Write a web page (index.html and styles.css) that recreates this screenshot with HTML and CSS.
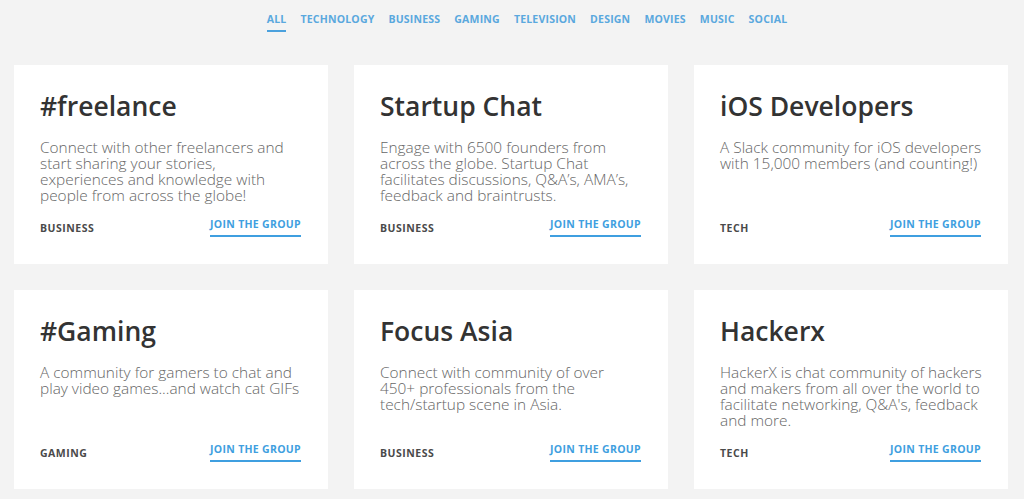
FILE: index.html
```html
<!DOCTYPE html>
<html lang="en">
<head>
<meta charset="utf-8">
<title>Communities</title>
<link rel="stylesheet" href="styles.css">
</head>
<body>
<nav class="filters">
  <a class="filter active">ALL</a>
  <a class="filter">TECHNOLOGY</a>
  <a class="filter">BUSINESS</a>
  <a class="filter">GAMING</a>
  <a class="filter">TELEVISION</a>
  <a class="filter">DESIGN</a>
  <a class="filter">MOVIES</a>
  <a class="filter">MUSIC</a>
  <a class="filter">SOCIAL</a>
</nav>
<main class="grid">
  <article class="card">
    <h2 class="title">#freelance</h2>
    <p class="desc desc-narrow">Connect with other freelancers and start sharing your stories, experiences and knowledge with people from across the globe!</p>
    <div class="footer"><span class="tag">BUSINESS</span><a class="join">JOIN THE GROUP</a></div>
  </article>
  <article class="card">
    <h2 class="title">Startup Chat</h2>
    <p class="desc">Engage with 6500 founders from across the globe. Startup Chat facilitates discussions, Q&amp;A’s, AMA’s, feedback and braintrusts.</p>
    <div class="footer"><span class="tag">BUSINESS</span><a class="join">JOIN THE GROUP</a></div>
  </article>
  <article class="card">
    <h2 class="title">iOS Developers</h2>
    <p class="desc">A Slack community for iOS developers with 15,000 members (and counting!)</p>
    <div class="footer"><span class="tag">TECH</span><a class="join">JOIN THE GROUP</a></div>
  </article>
  <article class="card">
    <h2 class="title">#Gaming</h2>
    <p class="desc">A community for gamers to chat and play video games...and watch cat GIFs</p>
    <div class="footer"><span class="tag">GAMING</span><a class="join">JOIN THE GROUP</a></div>
  </article>
  <article class="card">
    <h2 class="title">Focus Asia</h2>
    <p class="desc desc-narrow">Connect with community of over 450+ professionals from the tech/startup scene in Asia.</p>
    <div class="footer"><span class="tag">BUSINESS</span><a class="join">JOIN THE GROUP</a></div>
  </article>
  <article class="card">
    <h2 class="title">Hackerx</h2>
    <p class="desc">HackerX is chat community of hackers and makers from all over the world to facilitate networking, Q&amp;A's, feedback and more.</p>
    <div class="footer"><span class="tag">TECH</span><a class="join">JOIN THE GROUP</a></div>
  </article>
</main>
</body>
</html>
```
FILE: styles.css
```css
html, body {
  margin: 0;
  padding: 0;
  background: #f3f3f3;
  font-family: "Open Sans", "Liberation Sans", sans-serif;
}

.filters {
  display: flex;
  justify-content: center;
  gap: 14px;
  padding-top: 13px;
  height: 19px;
  padding-left: 30px;
}

.filter {
  font-size: 10.5px;
  font-weight: 700;
  color: #5aa8de;
  line-height: 13px;
  height: 17px;
  letter-spacing: 0.2px;
  box-sizing: border-box;
}

.filter.active {
  border-bottom: 2px solid #4ba1dd;
  height: 19px;
}

.grid {
  display: grid;
  grid-template-columns: repeat(3, 314px);
  gap: 26px;
  padding: 33px 16px 0 14px;
}

.card {
  background: #fff;
  height: 199px;
  box-sizing: border-box;
  padding: 23px 26px 27px 26px;
  display: flex;
  flex-direction: column;
}

.title {
  margin: 0;
  font-size: 26.5px;
  font-weight: 600;
  color: #333;
  line-height: 36px;
}

.desc {
  margin: 16px -4px 0 0;
  font-size: 15.4px;
  font-weight: 300;
  color: #666;
  line-height: 16px;
}

.desc-narrow {
  margin-right: 0;
  max-width: 258px;
}

.footer {
  margin-top: auto;
  display: flex;
  justify-content: space-between;
  align-items: flex-end;
}

.tag {
  font-size: 10.5px;
  font-weight: 700;
  color: #4a4a4a;
  letter-spacing: 0.5px;
  line-height: 12px;
  padding-bottom: 3px;
}

.join {
  font-size: 10.5px;
  font-weight: 700;
  color: #3f9fe0;
  letter-spacing: 0.3px;
  line-height: 12px;
  padding-bottom: 5px;
  border-bottom: 2px solid #3f9fe0;
  margin-right: 1px;
}
```
